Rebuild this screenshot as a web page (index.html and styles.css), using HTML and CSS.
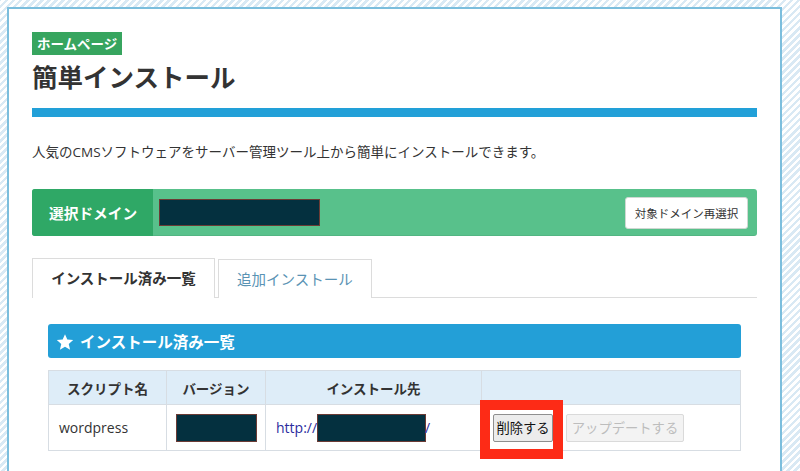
FILE: index.html
```html
<!DOCTYPE html>
<html lang="ja">
<head>
<meta charset="utf-8">
<title>簡単インストール</title>
<link rel="stylesheet" href="styles.css">
</head>
<body>
<div class="panel">
  <span class="badge">ホームページ</span>
  <h1 class="title">簡単インストール</h1>
  <div class="title-bar"></div>
  <p class="desc">人気のCMSソフトウェアをサーバー管理ツール上から簡単にインストールできます。</p>

  <div class="domain-bar">
    <div class="domain-label">選択ドメイン</div>
    <div class="domain-value"><span class="redact redact-domain"></span></div>
    <button class="reselect">対象ドメイン再選択</button>
  </div>

  <div class="tabs">
    <div class="tab active">インストール済み一覧</div>
    <div class="tab">追加インストール</div>
  </div>

  <div class="tab-body">
    <div class="section-head">
      <svg class="star" viewBox="0 0 24 24" width="18" height="18"><path d="M12 1.5l3.1 7.2 7.8.7-5.9 5.2 1.8 7.7L12 18.2l-6.8 4.1 1.8-7.7L1.1 9.4l7.8-.7z" fill="#fff"/></svg>
      <span>インストール済み一覧</span>
    </div>
    <table class="list">
      <thead>
        <tr>
          <th class="c1">スクリプト名</th>
          <th class="c2">バージョン</th>
          <th class="c3">インストール先</th>
          <th class="c4"></th>
        </tr>
      </thead>
      <tbody>
        <tr>
          <td>wordpress</td>
          <td><span class="redact redact-ver"></span></td>
          <td><a class="url" href="#">http://<span class="redact redact-url"></span>/</a></td>
          <td class="actions">
            <button class="btn-del">削除する</button><button class="btn-upd" disabled>アップデートする</button>
            <span class="marker"></span>
          </td>
        </tr>
      </tbody>
    </table>
  </div>
</div>
</body>
</html>
```

FILE: styles.css
```css
html, body {
  margin: 0;
  padding: 0;
  overflow: hidden;
  height: 100%;
}
body {
  font-family: "Open Sans", "Noto Sans CJK JP", sans-serif;
  color: #333;
  background: repeating-linear-gradient(-45deg, #ffffff 0, #ffffff 2.5px, #d9e9f4 2.5px, #d9e9f4 5px);
}
.panel {
  margin: 7px 18px 0 7px;
  background: #fff;
  border: 2px solid #7cbedd;
  border-bottom: none;
  padding: 23px 23px 60px 23px;
}
.badge {
  display: inline-block;
  background: #37a55f;
  color: #fff;
  font-family: "Noto Sans CJK JP", sans-serif;
  font-weight: 700;
  font-size: 13.5px;
  line-height: 23px;
  height: 23px;
  padding: 0 5px;
  vertical-align: top;
}
.title {
  margin: 3px 0 0 0;
  font-family: "Noto Sans CJK JP", sans-serif;
  font-size: 25.5px;
  line-height: 36px;
  font-weight: 700;
  color: #333;
}
.title-bar {
  height: 9px;
  background: #22a0d8;
  margin-top: 14px;
}
.desc {
  margin: 25px 0 0 0;
  font-size: 13.5px;
  line-height: 20px;
  color: #333;
}
.domain-bar {
  margin-top: 27px;
  height: 47px;
  display: flex;
  align-items: center;
  background: #58c18b;
  border-radius: 3px;
  overflow: hidden;
  box-shadow: inset 0 -1px 0 rgba(0,0,0,0.06);
}
.domain-label {
  width: 121px;
  align-self: stretch;
  background: #2fa866;
  color: #fff;
  font-family: "Noto Sans CJK JP", sans-serif;
  font-weight: 700;
  font-size: 14.7px;
  display: flex;
  align-items: center;
  padding-left: 17px;
  box-sizing: border-box;
}
.domain-value {
  flex: 1;
  padding-left: 7px;
  display: flex;
  align-items: center;
}
.redact {
  display: inline-block;
  background: #04303f;
  box-shadow: 0 0 0 1px #6b3b35;
  vertical-align: middle;
}
.redact-domain {
  width: 159px;
  height: 25px;
}
.reselect {
  margin-right: 9px;
  width: 123px;
  height: 32px;
  background: #fff;
  border: 1px solid #cfd8d2;
  border-radius: 3px;
  font-family: "Noto Sans CJK JP", sans-serif;
  font-size: 11.5px;
  color: #333;
  padding: 0;
}
.tabs {
  margin-top: 22px;
  display: flex;
  gap: 3px;
  border-bottom: 1px solid #dcdcdc;
  height: 39px;
}
.tab {
  border: 1px solid #dcdcdc;
  border-bottom: none;
  background: #fff;
  font-family: "Noto Sans CJK JP", sans-serif;
  font-size: 14.5px;
  line-height: 37px;
  height: 38px;
  padding: 0 18px;
  color: #5a93b4;
  margin-top: 1px;
}
.tab.active {
  color: #333;
  font-weight: 700;
  margin-top: 0;
  line-height: 38px;
  margin-bottom: -1px;
  height: 40px;
  width: 183px;
  box-sizing: border-box;
  text-align: center;
  padding: 0;
}
.tab-body {
  padding: 26px 16px 0 16px;
}
.section-head {
  height: 34px;
  background: #239fd7;
  border-radius: 3px;
  display: flex;
  align-items: center;
  color: #fff;
  font-family: "Noto Sans CJK JP", sans-serif;
  font-weight: 700;
  font-size: 15.5px;
  padding-left: 8px;
}
.star {
  margin-right: 6px;
  margin-top: 2px;
}
.list {
  margin-top: 12px;
  width: 100%;
  border-collapse: collapse;
  font-size: 14px;
}
.list th, .list td {
  border: 1px solid #d7dde3;
}
.list th {
  background: #deedf8;
  height: 33px;
  padding: 0;
  font-family: "Noto Sans CJK JP", sans-serif;
  font-weight: 700;
  font-size: 13.5px;
  color: #333;
}
.c1 { width: 117px; }
.c2 { width: 98px; }
.c3 { width: 215px; }
.list td {
  height: 45px;
  padding: 0 0 0 10px;
  color: #333;
  vertical-align: middle;
}
.redact-ver {
  width: 79px;
  height: 26px;
}
.url {
  color: #2b2c9e;
  text-decoration: none;
}
.redact-url {
  width: 107px;
  height: 26px;
  margin-left: 1px;
  vertical-align: -8px;
}
.actions {
  position: relative;
}
.list td.actions {
  padding-left: 11px;
}
.btn-del, .btn-upd {
  font-family: "Noto Sans CJK JP", sans-serif;
  font-size: 13.3px;
  height: 28px;
  padding: 0;
  border-radius: 2px;
  vertical-align: middle;
}
.btn-del {
  width: 60px;
  background: #ececec;
  border: 1px solid #8f8f8f;
  color: #111;
}
.btn-upd {
  width: 118px;
  margin-left: 13px;
  background: #f3f3f3;
  border: 1px solid #dadada;
  color: #bdbdbd;
}
.marker {
  position: absolute;
  left: -2px;
  top: -5px;
  width: 83px;
  height: 59px;
  box-sizing: border-box;
  border: 10px solid #fd2b16;
}
```
